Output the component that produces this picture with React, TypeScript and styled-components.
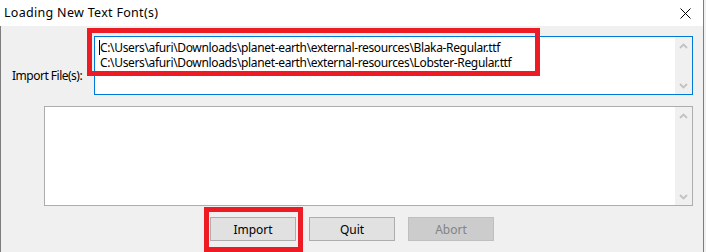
import styled, { createGlobalStyle } from 'styled-components';

const GlobalStyle = createGlobalStyle`
  html, body {
    margin: 0;
    padding: 0;
    background: #f0f0f0;
  }
  body {
    font-family: 'Noto Sans', 'Open Sans', 'Liberation Sans', sans-serif;
    font-size: 12px;
    color: #000;
  }
`;

const FILES = [
  'C:\\Users\\afuri\\Downloads\\planet-earth\\external-resources\\Blaka-Regular.ttf',
  'C:\\Users\\afuri\\Downloads\\planet-earth\\external-resources\\Lobster-Regular.ttf',
];

const Chevron = ({ down }: { down?: boolean }) => (
  <svg width="9" height="6" viewBox="0 0 9 6">
    <path
      d={down ? 'M1 1 L4.5 4.5 L8 1' : 'M1 5 L4.5 1.5 L8 5'}
      fill="none"
      stroke="#c2c2c2"
      strokeWidth="1.8"
    />
  </svg>
);

const ScrollBar = () => (
  <Track>
    <ArrowBox>
      <Chevron />
    </ArrowBox>
    <ArrowBox>
      <Chevron down />
    </ArrowBox>
  </Track>
);

const App = () => {
  return (
    <>
      <GlobalStyle />
      <Window>
        <TitleBar>
          <Title>Loading New Text Font(s)</Title>
          <CloseButton>
            <svg width="11" height="11" viewBox="0 0 11 11">
              <path d="M0.5 0.5 L10.5 10.5 M10.5 0.5 L0.5 10.5" stroke="#000" strokeWidth="1" />
            </svg>
          </CloseButton>
        </TitleBar>
        <Body>
          <FileRow>
            <Label>Import File(s):</Label>
            <FileBox $active>
              <Lines>
                {FILES.map((f, i) => (
                  <Line key={f}>
                    {i === 0 && <Caret />}
                    {f}
                  </Line>
                ))}
              </Lines>
              <ScrollBar />
              <Highlight $left={-8} $top={-9} $width={453} $height={48} />
            </FileBox>
          </FileRow>
          <OutputBox>
            <Lines />
            <ScrollBar />
          </OutputBox>
          <ButtonRow>
            <ButtonWrap>
              <Button>Import</Button>
              <Highlight $left={-6} $top={-10} $width={99} $height={45} />
            </ButtonWrap>
            <Button>Quit</Button>
            <Button disabled>Abort</Button>
          </ButtonRow>
        </Body>
      </Window>
    </>
  );
};

export default App;

const Window = styled.div`
  width: 703px;
  height: 252px;
  display: flex;
  flex-direction: column;
  border-right: 1px solid #7d7d7d;
  overflow: hidden;
`;

const TitleBar = styled.div`
  height: 26px;
  flex: none;
  background: #fff;
  display: flex;
  align-items: center;
  justify-content: space-between;
  padding-left: 4px;
`;

const Title = styled.span`
  font-size: 12.5px;
  line-height: 16px;
  letter-spacing: 0.3px;
  margin-top: -1px;
`;

const CloseButton = styled.div`
  width: 46px;
  height: 26px;
  display: flex;
  align-items: center;
  justify-content: center;
  margin-right: -5px;
  margin-top: 1px;
`;

const Body = styled.div`
  flex: 1;
  background: #f0f0f0;
  border-left: 1px solid #7d7d7d;
  padding: 10px 0 0 11px;
  display: flex;
  flex-direction: column;
`;

const FileRow = styled.div`
  display: flex;
  align-items: flex-start;
`;

const Label = styled.span`
  width: 82px;
  flex: none;
  margin-top: 32px;
  line-height: 16px;
  letter-spacing: -0.5px;
  white-space: nowrap;
`;

const FileBox = styled.div<{ $active?: boolean }>`
  position: relative;
  width: 599px;
  height: 59px;
  box-sizing: border-box;
  background: #fff;
  border: 1px solid ${({ $active }) => ($active ? '#0078d7' : '#adadad')};
  display: flex;
`;

const OutputBox = styled(FileBox)`
  width: 649px;
  height: 100px;
  margin: 11px 0 0 32px;
`;

const Lines = styled.div`
  flex: 1;
  padding: 3px 0 0 5px;
  white-space: nowrap;
  overflow: hidden;
  letter-spacing: -0.35px;
`;

const Line = styled.div`
  line-height: 15px;
  height: 15px;
  position: relative;
`;

const Caret = styled.span`
  position: absolute;
  left: -1px;
  top: 0;
  width: 1px;
  height: 15px;
  background: #000;
`;

const Track = styled.div`
  width: 17px;
  flex: none;
  background: #f0f0f0;
  display: flex;
  flex-direction: column;
  justify-content: space-between;
`;

const ArrowBox = styled.div`
  height: 17px;
  display: flex;
  align-items: center;
  justify-content: center;
`;

const ButtonRow = styled.div`
  display: flex;
  justify-content: center;
  gap: 13px;
  margin: 11px 0 0 -11px;
`;

const ButtonWrap = styled.div`
  position: relative;
  display: flex;
`;

const Button = styled.button`
  width: 86px;
  height: 24px;
  box-sizing: border-box;
  padding: 0;
  font-family: inherit;
  font-size: 12px;
  color: #000;
  background: #e1e1e1;
  border: 1px solid #adadad;
  &:disabled {
    background: #cccccc;
    border-color: #bfbfbf;
    color: #838383;
  }
`;

const Highlight = styled.div<{ $left: number; $top: number; $width: number; $height: number }>`
  position: absolute;
  left: ${({ $left }) => $left}px;
  top: ${({ $top }) => $top}px;
  width: ${({ $width }) => $width}px;
  height: ${({ $height }) => $height}px;
  box-sizing: border-box;
  border: 5px solid #ed1c24;
  pointer-events: none;
`;
